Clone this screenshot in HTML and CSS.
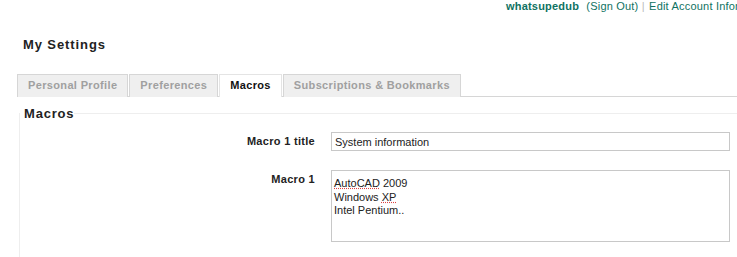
FILE: index.html
```html
<!DOCTYPE html>
<html lang="en">
<head>
    <meta charset="UTF-8">
    <title>My Settings</title>
    <link rel="stylesheet" href="styles.css">
</head>
<body>
    <div class="userbar">
        <a class="username" href="#">whatsupedub</a>
        <a href="#">(Sign Out)</a>
        <span class="sep">|</span>
        <a href="#">Edit Account Information</a>
    </div>

    <h1 class="page-title">My Settings</h1>

    <ul class="tabs">
        <li class="tab">Personal Profile</li>
        <li class="tab">Preferences</li>
        <li class="tab active">Macros</li>
        <li class="tab">Subscriptions &amp; Bookmarks</li>
    </ul>

    <fieldset class="panel">
        <legend>Macros</legend>
        <div class="form-row">
            <label for="macroTitle">Macro 1 title</label>
            <input type="text" id="macroTitle" value="System information">
        </div>
        <div class="form-row">
            <label for="macroBody">Macro 1</label>
            <div class="textarea" id="macroBody">
                <span class="typo">AutoCAD</span> 2009<br>
                Windows <span class="typo">XP</span><br>
                Intel Pentium..
            </div>
        </div>
    </fieldset>
</body>
</html>
```

FILE: styles.css
```css
body {
    font-family: "Liberation Sans", Arial, sans-serif;
    margin: 0;
    padding: 0;
    background: white;
    color: #222;
    overflow: hidden;
}
.userbar {
    font-size: 11px;
    line-height: 13px;
    padding: 0 0 2px 506px;
    letter-spacing: 0.2px;
    white-space: nowrap;
    overflow: hidden;
    color: #0f7262;
}
.userbar a {
    color: #0f7262;
    text-decoration: none;
}
.userbar .username {
    font-weight: bold;
    margin-right: 4px;
}
.userbar .sep {
    color: #bbb;
    margin: 0 1px 0 0;
}
.page-title {
    font-size: 13px;
    font-weight: bold;
    letter-spacing: 0.9px;
    color: #222;
    margin: 22px 0 0 23px;
    line-height: 15px;
}
.tabs {
    list-style: none;
    display: flex;
    gap: 1px;
    margin: 22px 0 0 17px;
    padding: 0;
    border-bottom: 1px solid #d6d6d6;
}
.tab {
    font-size: 11px;
    font-weight: bold;
    letter-spacing: 0.35px;
    color: #a0a0a0;
    background: #efefef;
    border: 1px solid #d6d6d6;
    border-bottom: none;
    padding: 4px 10px 4px;
    line-height: 13px;
    margin-bottom: -1px;
}
.tab.active {
    background: white;
    color: #111;
    border-color: #e4e4e4;
    padding-bottom: 5px;
}
.panel {
    margin: 9px 0 0 19px;
    padding: 0 0 40px 0;
    border: 1px solid #eee;
    border-right: none;
}
.panel legend {
    font-size: 13px;
    font-weight: bold;
    letter-spacing: 0.8px;
    color: #222;
    padding: 0 0 0 4px;
    margin-left: 0;
}
.form-row {
    display: grid;
    grid-template-columns: 295px 399px;
    gap: 16px;
    align-items: start;
    margin-top: 11px;
}
.form-row + .form-row {
    margin-top: 19px;
}
.form-row label {
    font-size: 11px;
    font-weight: bold;
    letter-spacing: 0.3px;
    color: #222;
    text-align: right;
    line-height: 13px;
    padding-top: 3px;
}
.form-row input {
    font-family: "Liberation Sans", Arial, sans-serif;
    font-size: 11px;
    height: 19px;
    box-sizing: border-box;
    border: 1px solid #c8c8c8;
    padding: 0 3px;
    color: #222;
}
.textarea {
    font-size: 11px;
    line-height: 13.5px;
    height: 72px;
    box-sizing: border-box;
    border: 1px solid #c8c8c8;
    padding: 6px 2px;
    color: #222;
}
.typo {
    text-decoration: underline dotted #d44;
}
```
